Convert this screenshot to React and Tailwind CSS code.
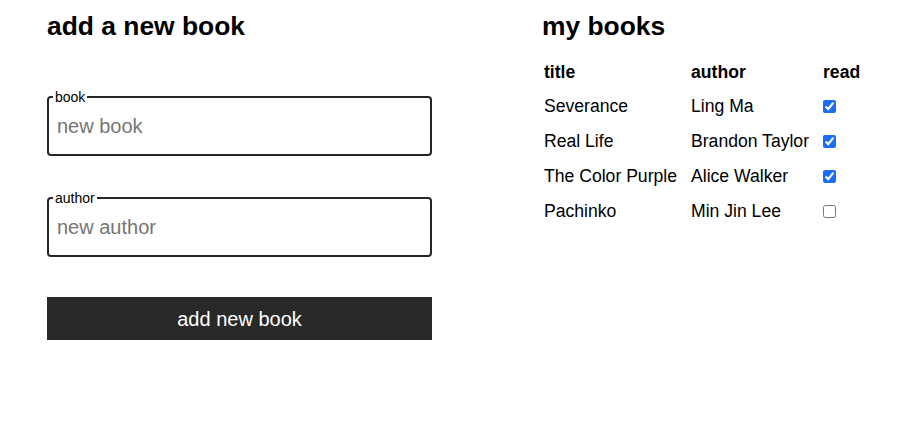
import { useState } from "react";

const initialBooks = [
  { title: "Severance", author: "Ling Ma", read: true },
  { title: "Real Life", author: "Brandon Taylor", read: true },
  { title: "The Color Purple", author: "Alice Walker", read: true },
  { title: "Pachinko", author: "Min Jin Lee", read: false },
];

const Field = ({ label, placeholder, value, onChange }) => (
  <fieldset className="border-2 border-[#262626] rounded-[4px] pl-[4px] pr-2 pb-[5px]">
    <legend className="px-[2px] text-[14px] leading-[14px] text-black">{label}</legend>
    <input
      value={value}
      onChange={(e) => onChange(e.target.value)}
      placeholder={placeholder}
      className="w-full h-[45px] pl-[4px] text-[20px] outline-none placeholder:text-[#757575] bg-transparent"
    />
  </fieldset>
);

const App = () => {
  const [books, setBooks] = useState(initialBooks);
  const [title, setTitle] = useState("");
  const [author, setAuthor] = useState("");

  const addBook = () => {
    if (!title || !author) return;
    setBooks([...books, { title, author, read: false }]);
    setTitle("");
    setAuthor("");
  };

  const toggleRead = (idx) => {
    setBooks(books.map((b, i) => (i === idx ? { ...b, read: !b.read } : b)));
  };

  return (
    <div className="flex gap-[110px] pl-[47px] pt-[11px] bg-white min-h-screen text-black font-['Liberation_Sans',Arial,sans-serif]">
      {/* Form */}
      <div className="w-[385px]">
        <h2 className="text-[26.4px] leading-[30px] font-bold">add a new book</h2>
        <div className="mt-[49px]">
          <Field label="book" placeholder="new book" value={title} onChange={setTitle} />
          <div className="mt-[35px]">
            <Field label="author" placeholder="new author" value={author} onChange={setAuthor} />
          </div>
          <button
            onClick={addBook}
            className="mt-[40px] w-full h-[43px] bg-[#292929] text-white text-[20px] leading-none"
          >
            add new book
          </button>
        </div>
      </div>

      {/* Book list */}
      <div>
        <h2 className="text-[26.4px] leading-[30px] font-bold">my books</h2>
        <table className="mt-[15px] border-collapse text-[17.6px] text-left">
          <thead>
            <tr className="h-[33px]">
              <th className="w-[149px] pl-[2px] font-bold align-middle">title</th>
              <th className="w-[132px] font-bold align-middle">author</th>
              <th className="font-bold align-middle">read</th>
            </tr>
          </thead>
          <tbody>
            {books.map((book, idx) => (
              <tr key={idx} className="h-[35px]">
                <td className="pl-[2px] align-middle">{book.title}</td>
                <td className="align-middle">{book.author}</td>
                <td className="align-middle">
                  <input
                    type="checkbox"
                    checked={book.read}
                    onChange={() => toggleRead(idx)}
                    className="w-[13px] h-[13px] m-0 block accent-[#1a6ef5]"
                  />
                </td>
              </tr>
            ))}
          </tbody>
        </table>
      </div>
    </div>
  );
};

export default App;
